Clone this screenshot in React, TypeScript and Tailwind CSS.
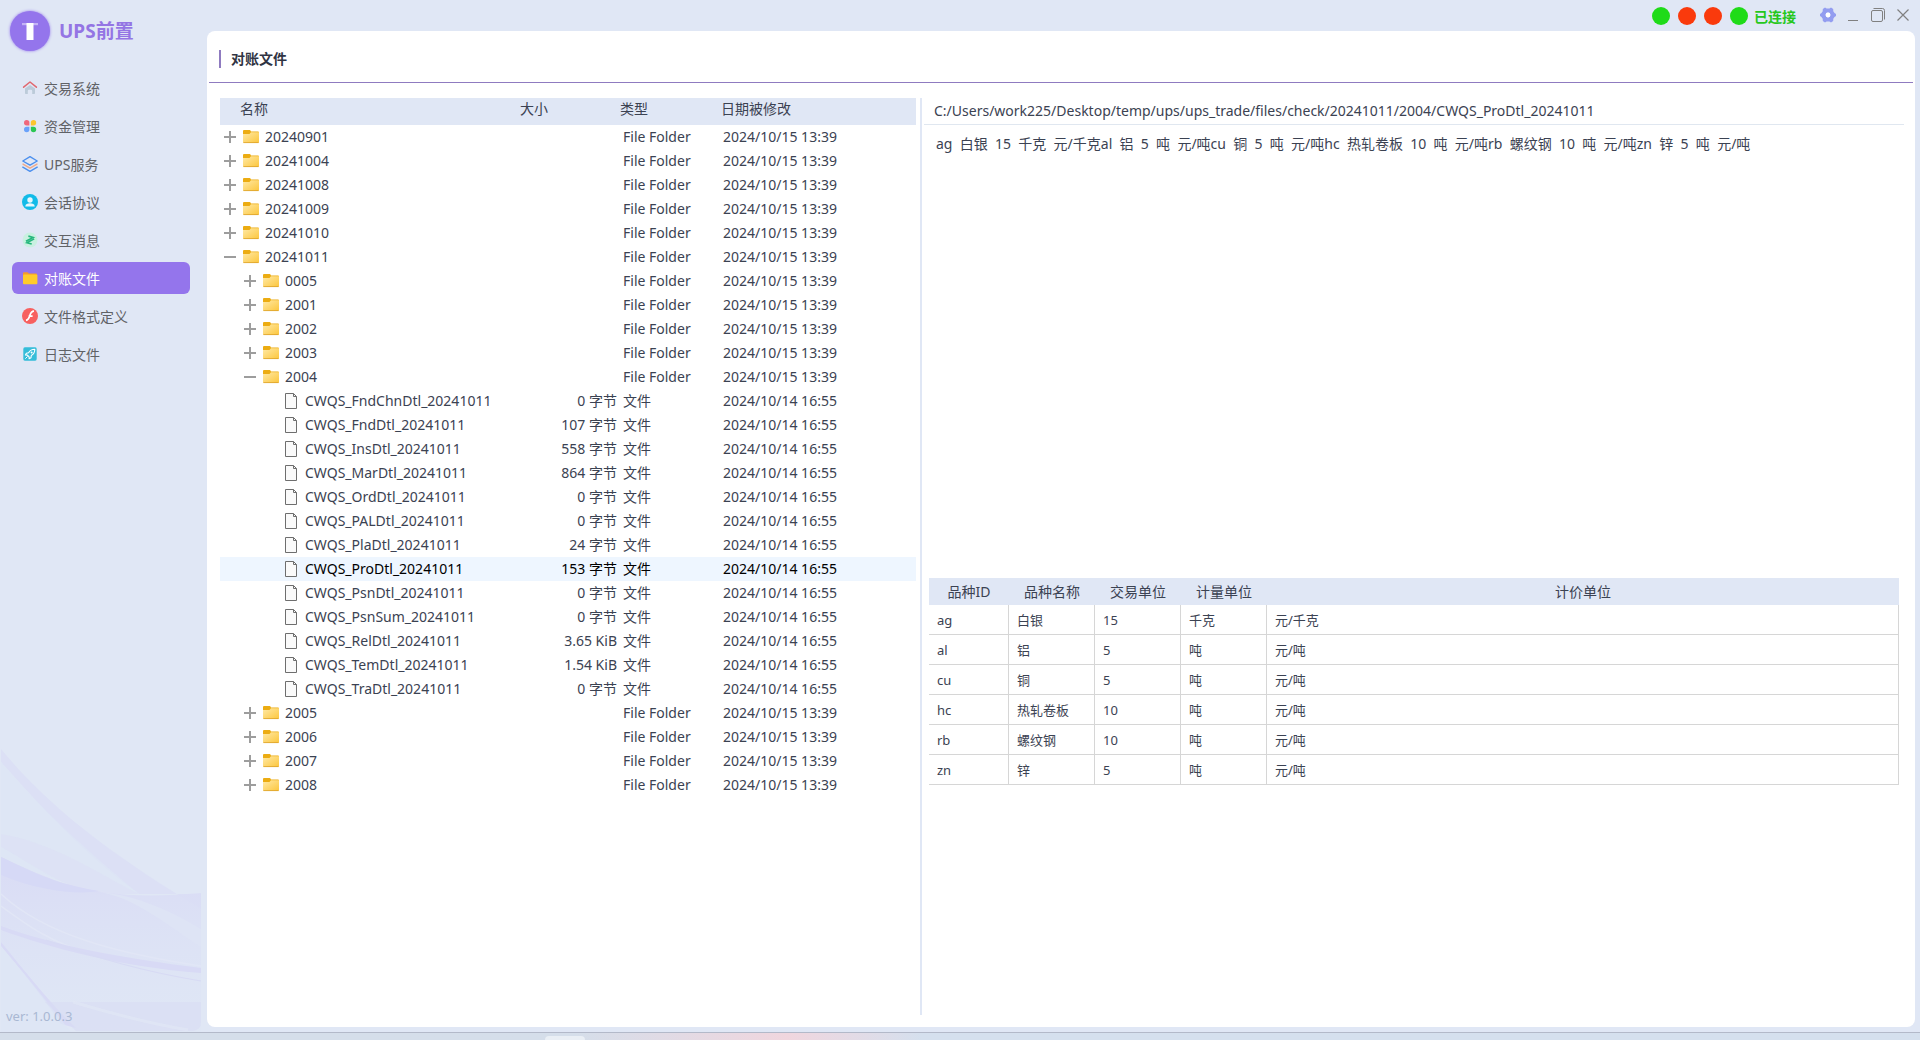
import { useState, type ReactNode } from 'react';

type TreeRow = {
  id: string;
  name: string;
  level: number;
  kind: 'folder' | 'file';
  open?: boolean;
  size?: string;
  date: string;
};

const folder = (name: string, level: number, open = false): TreeRow => ({
  id: `folder-${level}-${name}`,
  name,
  level,
  kind: 'folder',
  open,
  date: '2024/10/15 13:39',
});

const file = (name: string, size: string): TreeRow => ({
  id: name,
  name: `CWQS_${name}_20241011`,
  level: 2,
  kind: 'file',
  size,
  date: '2024/10/14 16:55',
});

const ROWS: TreeRow[] = [
  folder('20240901', 0),
  folder('20241004', 0),
  folder('20241008', 0),
  folder('20241009', 0),
  folder('20241010', 0),
  folder('20241011', 0, true),
  folder('0005', 1),
  folder('2001', 1),
  folder('2002', 1),
  folder('2003', 1),
  folder('2004', 1, true),
  file('FndChnDtl', '0 字节'),
  file('FndDtl', '107 字节'),
  file('InsDtl', '558 字节'),
  file('MarDtl', '864 字节'),
  file('OrdDtl', '0 字节'),
  file('PALDtl', '0 字节'),
  file('PlaDtl', '24 字节'),
  file('ProDtl', '153 字节'),
  file('PsnDtl', '0 字节'),
  file('PsnSum', '0 字节'),
  file('RelDtl', '3.65 KiB'),
  file('TemDtl', '1.54 KiB'),
  file('TraDtl', '0 字节'),
  folder('2005', 1),
  folder('2006', 1),
  folder('2007', 1),
  folder('2008', 1),
];

const PRODUCTS = [
  ['ag', '白银', '15', '千克', '元/千克'],
  ['al', '铝', '5', '吨', '元/吨'],
  ['cu', '铜', '5', '吨', '元/吨'],
  ['hc', '热轧卷板', '10', '吨', '元/吨'],
  ['rb', '螺纹钢', '10', '吨', '元/吨'],
  ['zn', '锌', '5', '吨', '元/吨'],
];

const RAW_TEXT = PRODUCTS.map((p) => p.join('  ')).join('');

const INDENT = ['pl-1', 'pl-6', 'pl-11'];

const NAV: { label: string; icon: ReactNode }[] = [
  {
    label: '交易系统',
    icon: (
      <svg viewBox="0 0 16 16" className="size-4">
        <path d="M3 8.400 8 5l5 3.400v4.800a.8.8 0 0 1-.8.8H10.200v-3a1.200 1.200 0 0 0-1.200-1.200H7a1.200 1.200 0 0 0-1.200 1.200v3H3.800a.8.8 0 0 1-.8-.8z" fill="#bccbd9" />
        <path d="M1.600 7.200 8 2l6.400 5.200" fill="none" stroke="#e0686f" strokeWidth="1.500" strokeLinecap="round" strokeLinejoin="round" />
      </svg>
    ),
  },
  {
    label: '资金管理',
    icon: (
      <svg viewBox="0 0 16 16" className="size-4">
        <path d="M4.700 2A2.700 2.700 0 1 0 4.700 7.400H7.400V4.700A2.700 2.700 0 0 0 4.700 2z" fill="#f0687c" />
        <path d="M11.500 2A2.700 2.700 0 1 1 11.500 7.400H8.800V4.700A2.700 2.700 0 0 1 11.500 2z" fill="#fbc52d" />
        <path d="M4.700 14.200A2.700 2.700 0 1 1 4.700 8.800H7.400v2.700a2.700 2.700 0 0 1-2.700 2.700z" fill="#6aa2fa" />
        <path d="M11.500 14.200A2.700 2.700 0 1 0 11.500 8.800H8.800v2.700a2.700 2.700 0 0 0 2.700 2.700z" fill="#2bc653" />
      </svg>
    ),
  },
  {
    label: 'UPS服务',
    icon: (
      <svg viewBox="0 0 16 16" className="size-4" fill="none" strokeWidth="1.400" strokeLinejoin="round" strokeLinecap="round">
        <path d="M8 .7 15.200 5 8 9.200.8 5z" stroke="#4b8fee" />
        <path d="M1 8.200 8 12.200l7-4" stroke="#f0a988" />
        <path d="M.8 11.200 8 15.300l7.200-4.100" stroke="#4b8fee" />
      </svg>
    ),
  },
  {
    label: '会话协议',
    icon: (
      <svg viewBox="0 0 16 16" className="size-4">
        <circle cx="8" cy="8" r="8" fill="#12bbe8" />
        <circle cx="8" cy="6" r="2.700" fill="#e6f7fd" />
        <path d="M3.200 12.400C3.600 10 5.400 9.300 8 9.300s4.400.7 4.800 3.100z" fill="#e6f7fd" />
      </svg>
    ),
  },
  {
    label: '交互消息',
    icon: (
      <svg viewBox="0 0 16 16" className="size-4">
        <circle cx="8" cy="8" r="7.500" fill="#c9f0e0" />
        <path d="M3.800 7.200H12L8.400 3.800M12.200 9H4l3.600 3.400" transform="rotate(-28 8 8)" fill="none" stroke="#26b77d" strokeWidth="1.600" />
      </svg>
    ),
  },
  {
    label: '对账文件',
    icon: (
      <svg viewBox="0 0 16 16" className="size-4">
        <path d="M1 3.200a1 1 0 0 1 1-1h3.600l1.300 1.400H14a1 1 0 0 1 1 1V7H1z" fill="#f39b2d" />
        <rect x="1" y="4.400" width="14.400" height="9.800" rx="1" fill="#ffcb2b" />
      </svg>
    ),
  },
  {
    label: '文件格式定义',
    icon: (
      <svg viewBox="0 0 16 16" className="size-4">
        <circle cx="8" cy="8" r="8" fill="#f7605f" />
        <path d="M12 3.200C9.400 3.200 8.600 5 7.900 7.300 7.200 9.800 6.400 12 4 12.400M6.600 8.100H10.600" fill="none" stroke="#fff" strokeWidth="1.700" />
      </svg>
    ),
  },
  {
    label: '日志文件',
    icon: (
      <svg viewBox="0 0 16 16" className="size-4">
        <rect x="1.300" y="1.300" width="13.400" height="13.400" rx="1.600" fill="#35bdd9" />
        <path d="M12.800 3.200c-3 0-5 1.200-6.200 3.600L4.400 7.200 3.400 9l2 .1 1.700 1.700v2L9 11.700l.3-2.300c2.400-1.200 3.500-3.200 3.500-6.200z" fill="none" stroke="#fff" strokeWidth="1.100" strokeLinejoin="round" />
        <circle cx="9.600" cy="6.400" r="1" fill="#fff" />
        <path d="M3.300 12.700 5.600 10.400" stroke="#fff" strokeWidth="1" />
      </svg>
    ),
  },
];

function FolderIcon() {
  return (
    <svg viewBox="0 0 16 14" className="h-[14px] w-4" aria-hidden="true">
      <defs>
        <linearGradient id="folderFill" x1="0" y1="0" x2="1" y2="1">
          <stop offset="0" stopColor="#ffe9a6" />
          <stop offset="1" stopColor="#fcc63c" />
        </linearGradient>
      </defs>
      <path d="M0 1A1 1 0 0 1 1 0h5.600a1 1 0 0 1 1 .8L8 1.500H15a1 1 0 0 1 1 1v2H0z" fill="#ecac12" />
      <path d="M0 4h6.500L8 2.300h8v9.700a1 1 0 0 1-1 1H1a1 1 0 0 1-1-1z" fill="url(#folderFill)" />
      <path d="M.4 12.600h15.200" stroke="#dba02a" strokeWidth=".8" />
    </svg>
  );
}

function FileIcon() {
  return (
    <svg viewBox="0 0 16 16" className="size-4" fill="none" stroke="#6e6e6e" aria-hidden="true">
      <path d="M2.500.5h8l3 3v12h-11z" fill="#fafafa" />
      <path d="M10.500.5v3h3" />
    </svg>
  );
}

function Expander({ open }: { open?: boolean }) {
  return (
    <button type="button" className="size-3" aria-label={open ? '收起' : '展开'}>
      <svg viewBox="0 0 12 12" className="size-3" stroke="#9d9d9d" strokeWidth="2">
        <path d={open ? 'M0 6h12' : 'M0 6h12M6 0v12'} />
      </svg>
    </button>
  );
}

function SidebarWaves() {
  return (
    <svg
      viewBox="0 0 200 290"
      className="absolute bottom-0 left-px h-[290px] w-[200px]"
      aria-hidden="true"
    >
      <defs>
        <linearGradient id="waveBand" x1="0" y1="0" x2="0" y2="1">
          <stop offset="0" stopColor="#d9dbf5" />
          <stop offset="1" stopColor="#dee6f5" stopOpacity=".4" />
        </linearGradient>
      </defs>
      <path d="M0 7C50 68 115 115 200 167v-15H138C80 110 38 62 0 20z" fill="#dbdef5" opacity=".8" />
      <path d="M0 20C40 68 90 112 138 152 90 152 40 135 0 115z" fill="#dde6f5" opacity=".7" />
      <path d="M0 92C50 100 95 130 138 152h-40C60 145 28 120 0 105z" fill="#dcdff5" opacity=".6" />
      <path d="M0 115C60 143 98 160 200 151V290H75L0 200z" fill="url(#waveBand)" />
      <path d="M0 115c30 14 50 26 98 34-20 4-60 0-98-16z" fill="#d6d9f6" />
      <path d="M98 150c35 5 68 33 102 55v-18c-30-18-65-34-102-37z" fill="#dee4f5" />
      <path d="M0 152c45 42 120 60 200 72M0 164c30 22 50 36 90 48" fill="none" stroke="#e1e6f6" strokeWidth="1.500" />
      <path d="M0 184c55 20 120 32 200 42v5C120 225 50 206 0 188z" fill="#d8daf5" />
      <path d="M45 198c50 18 100 32 155 41" fill="none" stroke="#d7daf4" />
      <path d="M0 200c28 34 48 60 75 86l-15-4C40 252 20 228 0 204z" fill="#d8daf5" />
      <path d="M0 205c25 28 42 50 70 85H0z" fill="#dde6f5" opacity=".7" />
      <path d="M44 260H200v20q0 8-8 9H75z" fill="#d9dcf4" opacity=".6" />
      <path d="M72 260c40 12 80 22 115 28" fill="none" stroke="#e1e7f5" strokeWidth="3" opacity=".7" />
    </svg>
  );
}

function Sidebar() {
  const [active, setActive] = useState('对账文件');

  return (
    <aside className="relative flex w-[207px] shrink-0 flex-col">
      <SidebarWaves />
      <div className="relative flex items-center gap-[9px] pt-[11px] pl-[10px]">
        <div className="flex size-10 items-center justify-center rounded-full bg-[#9475ec] shadow-[0_0_3px_#9475ec]">
          <svg viewBox="0 0 16 17" className="h-[17px] w-4">
            <path d="M0 0h16v2.200H0z" fill="#c4b3f6" />
            <path d="M4.500 0h7v17h-7z" fill="#fff" />
          </svg>
        </div>
        <h1 className="text-[19px] leading-7 font-bold text-[#9475e4]">UPS前置</h1>
      </div>
      <nav className="relative mt-[21px] flex flex-col gap-[6px] pr-[17px] pl-3">
        {NAV.map((item) => (
          <button
            key={item.label}
            type="button"
            onClick={() => setActive(item.label)}
            className={`flex h-8 items-center gap-[6px] rounded-md pl-[10px] text-left text-[14px] ${
              active === item.label ? 'bg-[#9475ec] text-white' : 'text-[#606266]'
            }`}
          >
            {item.icon}
            {item.label}
          </button>
        ))}
      </nav>
      <p className="relative mt-auto pb-[6px] pl-[6px] text-[13px] leading-5 text-[#a9b8d3]">ver: 1.0.0.3</p>
    </aside>
  );
}

function TitleBar() {
  return (
    <header className="flex h-[31px] shrink-0 items-start justify-end pr-[6px]">
      <div className="flex h-8 items-center gap-2">
        <span className="size-[18px] rounded-full bg-[#1fdb18]" />
        <span className="size-[18px] rounded-full bg-[#fa3a0c]" />
        <span className="size-[18px] rounded-full bg-[#fa3a0c]" />
        <span className="size-[18px] rounded-full bg-[#1fdb18]" />
      </div>
      <span className="ml-[6px] text-[14px] leading-[34px] font-bold text-[#27c71c]">已连接</span>
      <div className="ml-[24px] flex h-[30px] items-center">
        <button type="button" aria-label="设置">
          <svg viewBox="0 0 16 16" className="size-4">
            <path
              fillRule="evenodd"
              fill="#939df0"
              d="M5 .6 6.600 1.600H9.400L11 .6 13.200 2.100 13.300 4.200 14.500 6.100 16 7v2l-1.500.9-1.200 1.900-.1 2.100L11 15.400 9.400 14.400H6.600L5 15.400 2.800 13.900 2.700 11.800 1.500 9.900 0 9V7l1.500-.9 1.200-1.900.1-2.100zM8 5.600a2.400 2.400 0 1 0 0 4.800 2.400 2.400 0 0 0 0-4.800z"
            />
            <circle cx="8" cy="8" r="2.400" fill="#fff" />
          </svg>
        </button>
        <button type="button" aria-label="最小化" className="ml-3">
          <svg viewBox="0 0 10 16" className="h-4 w-[10px]" stroke="#808080">
            <path d="M0 13.500h10" />
          </svg>
        </button>
        <button type="button" aria-label="还原" className="ml-[13px]">
          <svg viewBox="0 0 14 14" className="size-[14px]" fill="none" stroke="#808080">
            <rect x=".5" y="2.500" width="11" height="11" rx="1.500" />
            <path d="M2.500.5h9a2 2 0 0 1 2 2v9" />
          </svg>
        </button>
        <button type="button" aria-label="关闭" className="ml-3">
          <svg viewBox="0 0 12 12" className="size-3" stroke="#808080" strokeWidth="1.200">
            <path d="M.5.5l11 11M11.500.5l-11 11" />
          </svg>
        </button>
      </div>
    </header>
  );
}

function FileTree() {
  const [selected, setSelected] = useState('ProDtl');

  return (
    <div className="w-[696px] shrink-0">
      <table className="w-full table-fixed text-left text-[14px] text-[#3b4252]">
        <colgroup>
          <col className="w-[297px]" />
          <col className="w-[100px]" />
          <col className="w-[101px]" />
          <col />
        </colgroup>
        <thead>
          <tr className="h-[27px] bg-[#e0e7f5]">
            <th className="p-0 pb-[6px] pl-5 leading-5 font-normal">名称</th>
            <th className="p-0 pb-[6px] pl-[3px] leading-5 font-normal">大小</th>
            <th className="p-0 pb-[6px] pl-[3px] leading-5 font-normal">类型</th>
            <th className="p-0 pb-[6px] pl-[3px] leading-5 font-normal">日期被修改</th>
          </tr>
        </thead>
        <tbody>
          {ROWS.map((row) => (
            <tr
              key={row.id}
              onClick={() => setSelected(row.id)}
              className={`h-6 leading-6 ${row.id === selected ? 'bg-[#eef6ff] text-black' : ''}`}
            >
              <td className="p-0">
                <div className={`flex h-6 items-center ${INDENT[row.level]}`}>
                  {row.kind === 'folder' ? <Expander open={row.open} /> : <span className="w-3" />}
                  <span className="mr-[6px] ml-[7px]">
                    {row.kind === 'folder' ? <FolderIcon /> : <FileIcon />}
                  </span>
                  {row.name}
                </div>
              </td>
              <td className="p-0 text-right">{row.size}</td>
              <td className="p-0 pl-[6px]">{row.kind === 'folder' ? 'File Folder' : '文件'}</td>
              <td className="p-0 pl-[5px]">{row.date}</td>
            </tr>
          ))}
        </tbody>
      </table>
    </div>
  );
}

function Preview() {
  return (
    <div className="ml-[2px] flex min-w-0 flex-1 flex-col text-[#3b4252]">
      <div className="h-[27px] border-b border-[#e0e7f0] pl-[10px] text-[14px] leading-[26px]">
        C:/Users/work225/Desktop/temp/ups/ups_trade/files/check/20241011/2004/CWQS_ProDtl_20241011
      </div>
      <pre className="h-[453px] pt-[9px] pl-3 font-[inherit] text-[14px] leading-5 whitespace-pre-wrap">
        {RAW_TEXT}
      </pre>
      <div className="pr-[5px] pl-[5px]">
        <table className="w-full table-fixed border-separate border-spacing-0 text-left text-[13px]">
          <colgroup>
            <col className="w-[80px]" />
            <col className="w-[86px]" />
            <col className="w-[86px]" />
            <col className="w-[86px]" />
            <col />
          </colgroup>
          <thead>
            <tr className="h-[27px] bg-[#e0e7f5] text-center text-[14px] leading-5">
              <th className="p-0 font-normal">品种ID</th>
              <th className="p-0 font-normal">品种名称</th>
              <th className="p-0 font-normal">交易单位</th>
              <th className="p-0 font-normal">计量单位</th>
              <th className="p-0 font-normal">计价单位</th>
            </tr>
          </thead>
          <tbody>
            {PRODUCTS.map((cells) => (
              <tr key={cells[0]} className="h-[30px] leading-5">
                {cells.map((cell, i) => (
                  <td key={i} className="border-r border-b border-[#d6d6d6] p-0 pl-2">
                    {cell}
                  </td>
                ))}
              </tr>
            ))}
          </tbody>
        </table>
      </div>
    </div>
  );
}

export default function App() {
  return (
    <div className="flex min-h-screen flex-col bg-[#e0e7f5] font-['Noto_Sans','Noto_Sans_CJK_SC',sans-serif]">
      <div className="flex flex-1">
        <Sidebar />
        <div className="flex min-w-0 flex-1 flex-col pr-[5px] pb-[5px]">
          <TitleBar />
          <main className="flex flex-1 flex-col rounded-lg bg-white">
            <div className="mx-[2px] flex h-[52px] items-center border-b border-[#8f7bc0] pt-1 pl-[10px]">
              <span className="h-[18px] w-[2px] bg-[#8f7bc0]" />
              <h2 className="pl-[10px] text-[14px] leading-5 font-bold text-[#303443]">对账文件</h2>
            </div>
            <div className="flex flex-1 pt-[15px] pr-[11px] pb-[12px] pl-[13px]">
              <FileTree />
              <div className="ml-1 w-[2px] bg-[#e0e7f5]" />
              <Preview />
            </div>
          </main>
        </div>
      </div>
      <footer className="flex h-[8px] shrink-0 items-end border-t border-[#b3b9c9] bg-linear-to-r from-[#d5deea] from-30% via-[#f0d6de] via-41% to-[#d5e0ee] to-48%">
        <span className="ml-[545px] h-1 w-10 rounded-t-sm bg-[#eaeff5]" />
      </footer>
    </div>
  );
}
